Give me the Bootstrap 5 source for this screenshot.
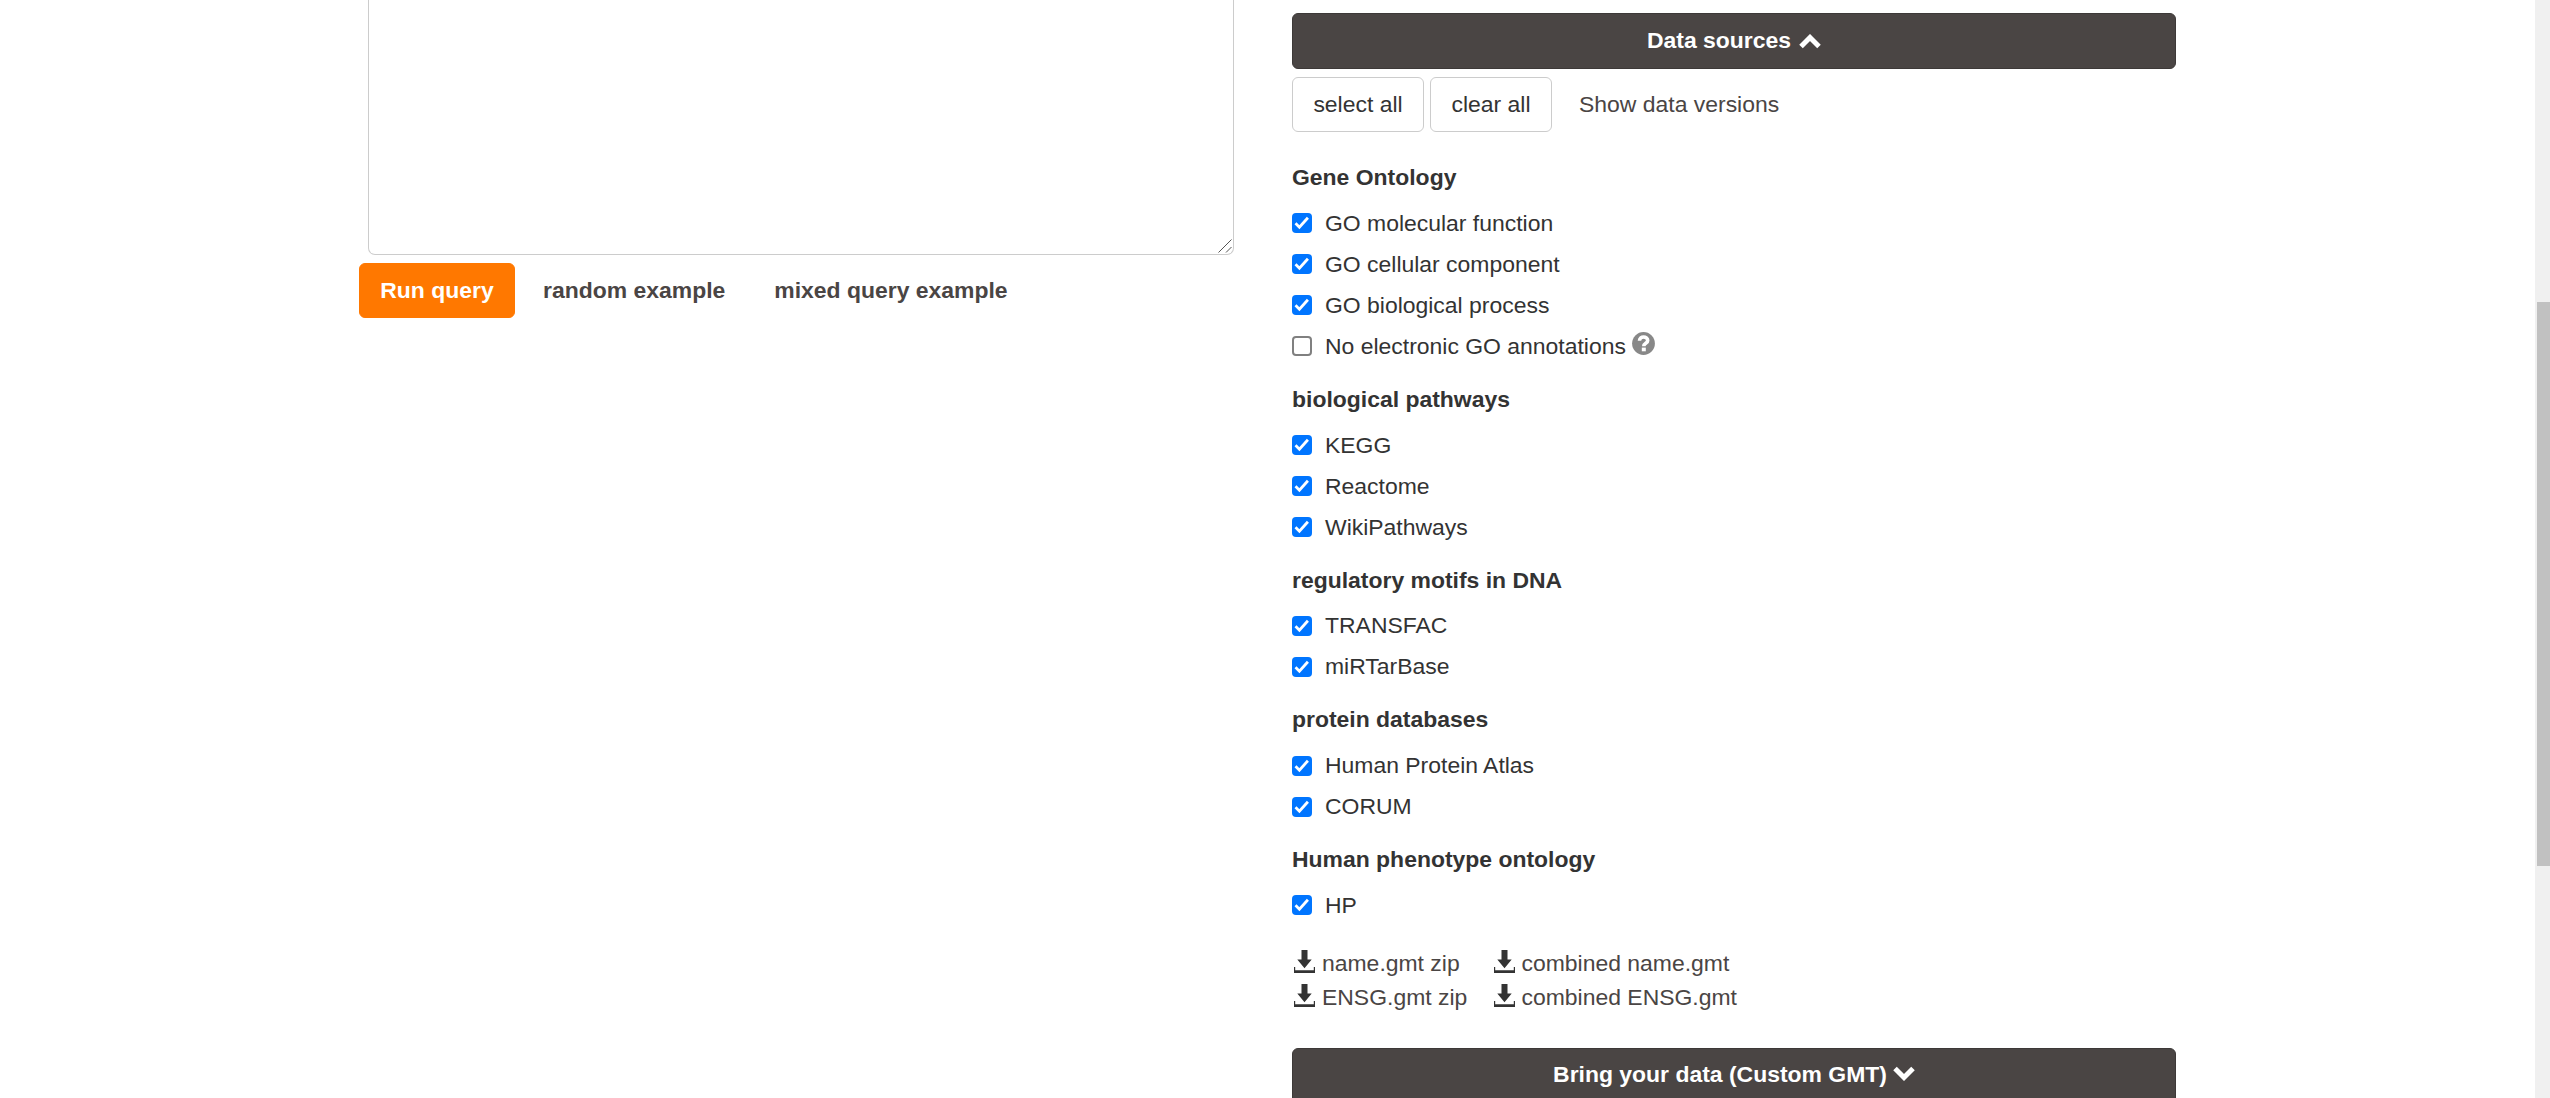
<!DOCTYPE html>
<html lang="en">
<head>
<meta charset="utf-8">
<title>Functional profiling</title>
<link href="https://cdn.jsdelivr.net/npm/bootstrap@5.3.0/dist/css/bootstrap.min.css" rel="stylesheet">
<style>
  body { font-family: "Liberation Sans", Arial, sans-serif; font-size: 22.95px; line-height: 33px; color: #333; background: #fff; height: 1098px; overflow: hidden; }
  .page-main { height: 1098px; padding-left: 359px; }
  .query-col { width: 933px; }
  .query-wrap { width: 875px; }
  .source-col { width: 884px; padding-top: 13px; }
  .query-box { width: 866px; height: 255px; margin-left: 9px; border: 1px solid #ccc; border-top: 0; border-radius: 0 0 7px 7px; resize: none; box-shadow: none; }
  .grip { right: 2px; bottom: 2px; width: 14px; height: 14px; }
  .btn { --bs-btn-font-size: 22.95px; --bs-btn-line-height: 33px; --bs-btn-border-radius: 6px; --bs-btn-padding-x: 20px; --bs-btn-padding-y: 10px; --bs-btn-color: #333; height: 55px; white-space: nowrap; }
  .btn-run { --bs-btn-color: #fff; --bs-btn-bg: #ff7800; --bs-btn-border-color: #ff7800; width: 156px; }
  .btn-plain { --bs-btn-color: #4a4544; }
  .btn-outline-grey { --bs-btn-border-color: #ccc; --bs-btn-bg: #fff; }
  .btn-select { width: 132px; }
  .btn-clear { width: 122px; }
  .btn-panel { --bs-btn-color: #fff; --bs-btn-bg: #4a4544; --bs-btn-border-color: #3d3938; height: 56px; padding-top: 9px; padding-bottom: 11px; }
  .tools { gap: 6px; padding-top: 8px; margin-bottom: 29px; }
  .actions { gap: 7px; }
  .group-title { font-size: 22.95px; line-height: 33px; font-weight: 700; margin: 0 0 8.75px; }
  .group { margin-bottom: 16px; }
  .source-item { height: 41px; line-height: 41px; }
  .source-item .form-check-input { width: 20px; height: 20px; margin: 0 13px 0 0; float: none; border: 2px solid #808080; border-radius: 4px; flex: none; }
  .source-item .form-check-input:checked { border: 0; background: #0075ff url("data:image/svg+xml,%3Csvg xmlns='http://www.w3.org/2000/svg' viewBox='0 0 20 20'%3E%3Cpath d='M3.5 10.3 7.4 14.2 15.9 4.7' fill='none' stroke='white' stroke-width='2.8'/%3E%3C/svg%3E") center/20px 20px; }
  .help-icon { margin: 0 0 6px 6px; }
  .downloads { margin: 20px 0 33px; }
  .dl { line-height: 35px; height: 34.5px; color: #4a4544; }
  .dl svg { margin: 4px 7px 0 2px; flex: none; }
  .dl-first { width: 199.5px; }
  .chev-up { margin: 2px 0 0 8px; }
  .chev-down { margin: 0 0 2px 6px; }
  .scroll-track { top: 0; right: 0; width: 15px; height: 1098px; background: #f0f0f0; }
  .scroll-thumb { width: 13px; height: 564px; margin: 302px 0 0 2px; background: #c1c1c1; }
</style>
<script src="https://cdn.jsdelivr.net/npm/bootstrap@5.3.0/dist/js/bootstrap.bundle.min.js"></script>
</head>
<body>
<svg class="d-none">
  <symbol id="save" viewBox="0 0 21 23"><path d="M7.500 0h6v9.500h4.200L10.500 18.300 3.300 9.500h4.200zM0 17h1.200v3.200h18.600V17H21v6H0z" fill="#333"/></symbol>
</svg>
<main class="page-main d-flex">
  <section class="query-col">
    <div class="query-wrap position-relative">
      <textarea class="form-control query-box" aria-label="Query"></textarea>
      <svg class="grip position-absolute" viewBox="0 0 14 14"><path d="M.5 13.500 13.500.5M8 13.500 13.500 8" stroke="#555" stroke-width="1"/></svg>
    </div>
    <div class="actions d-flex mt-2">
      <button class="btn btn-run fw-bold">Run query</button>
      <button class="btn btn-plain fw-bold">random example</button>
      <button class="btn btn-plain fw-bold">mixed query example</button>
    </div>
  </section>

  <section class="source-col">
    <button class="btn btn-panel fw-bold w-100 d-flex justify-content-center align-items-center">Data sources
      <svg class="chev-up" width="22" height="15" viewBox="0 0 22 15"><path d="M2 12.500 11 3.500 20 12.500" fill="none" stroke="#fff" stroke-width="5"/></svg>
    </button>
    <div class="tools d-flex">
      <button class="btn btn-outline-grey btn-select">select all</button>
      <button class="btn btn-outline-grey btn-clear">clear all</button>
      <button class="btn btn-plain">Show data versions</button>
    </div>

    <div class="group">
      <h4 class="group-title">Gene Ontology</h4>
      <label class="source-item d-flex align-items-center"><input class="form-check-input" type="checkbox" checked>GO molecular function</label>
      <label class="source-item d-flex align-items-center"><input class="form-check-input" type="checkbox" checked>GO cellular component</label>
      <label class="source-item d-flex align-items-center"><input class="form-check-input" type="checkbox" checked>GO biological process</label>
      <label class="source-item d-flex align-items-center"><input class="form-check-input" type="checkbox">No electronic GO annotations
        <svg class="help-icon" width="23" height="23" viewBox="0 0 23 23"><circle cx="11.500" cy="11.500" r="11.400" fill="#888"/><path d="M7.500 8.800c0-5.300 8.200-4.900 8.200-.3 0 3-3.900 2.700-3.900 5.700" fill="none" stroke="#fff" stroke-width="3.600"/><path d="M9.800 15.600h4v3.700h-4z" fill="#fff"/></svg>
      </label>
    </div>
    <div class="group">
      <h4 class="group-title">biological pathways</h4>
      <label class="source-item d-flex align-items-center"><input class="form-check-input" type="checkbox" checked>KEGG</label>
      <label class="source-item d-flex align-items-center"><input class="form-check-input" type="checkbox" checked>Reactome</label>
      <label class="source-item d-flex align-items-center"><input class="form-check-input" type="checkbox" checked>WikiPathways</label>
    </div>
    <div class="group">
      <h4 class="group-title">regulatory motifs in DNA</h4>
      <label class="source-item d-flex align-items-center"><input class="form-check-input" type="checkbox" checked>TRANSFAC</label>
      <label class="source-item d-flex align-items-center"><input class="form-check-input" type="checkbox" checked>miRTarBase</label>
    </div>
    <div class="group">
      <h4 class="group-title">protein databases</h4>
      <label class="source-item d-flex align-items-center"><input class="form-check-input" type="checkbox" checked>Human Protein Atlas</label>
      <label class="source-item d-flex align-items-center"><input class="form-check-input" type="checkbox" checked>CORUM</label>
    </div>
    <div class="group mb-0">
      <h4 class="group-title">Human phenotype ontology</h4>
      <label class="source-item d-flex align-items-center"><input class="form-check-input" type="checkbox" checked>HP</label>
    </div>

    <div class="downloads">
      <div class="d-flex dl">
        <div class="dl-first d-flex"><svg width="21" height="23"><use href="#save"/></svg>name.gmt zip</div>
        <div class="d-flex"><svg width="21" height="23"><use href="#save"/></svg>combined name.gmt</div>
      </div>
      <div class="d-flex dl">
        <div class="dl-first d-flex"><svg width="21" height="23"><use href="#save"/></svg>ENSG.gmt zip</div>
        <div class="d-flex"><svg width="21" height="23"><use href="#save"/></svg>combined ENSG.gmt</div>
      </div>
    </div>
    <button class="btn btn-panel fw-bold w-100 d-flex justify-content-center align-items-center">Bring your data (Custom GMT)
      <svg class="chev-down" width="22" height="15" viewBox="0 0 22 15"><path d="M2 2.500 11 11.500 20 2.500" fill="none" stroke="#fff" stroke-width="5"/></svg>
    </button>
  </section>
</main>
<div class="scroll-track position-absolute"><div class="scroll-thumb"></div></div>
</body>
</html>
